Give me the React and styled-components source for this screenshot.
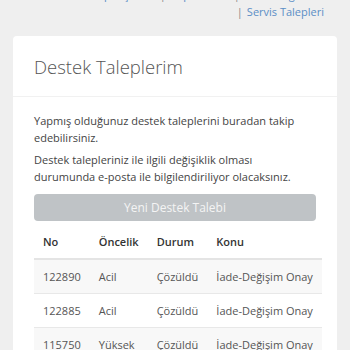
import React from "react";
import styled, { createGlobalStyle } from "styled-components";

const Global = createGlobalStyle`
  html, body { margin: 0; padding: 0; background: #efefef; }
  body { font-family: "Open Sans", "Liberation Sans", sans-serif; color: #555; }
  * { box-sizing: border-box; }
`;

const Page = styled.div`
  width: 350px;
  height: 350px;
  overflow: hidden;
  background: #efefef;
`;

const Nav = styled.div`
  margin-top: -14px;
  padding-right: 26px;
  text-align: right;
  font-size: 11px;
  line-height: 17px;
`;

const NavLine = styled.div`
  white-space: nowrap;
`;

const Sep = styled.span`
  color: #888;
  margin: 0 4px;
`;

const Link = styled.a`
  color: #5b8ec6;
  text-decoration: none;
`;

const Card = styled.div`
  margin: 16px 13px 0;
  background: #fff;
  border-radius: 4px;
`;

const CardHeader = styled.div`
  padding: 17px 21px 16px;
  border-bottom: 1px solid #f1f1f1;
`;

const Title = styled.h2`
  margin: 0;
  font-size: 18.5px;
  line-height: 27px;
  font-weight: 300;
  color: #555;
`;

const CardBody = styled.div`
  padding: 15px 21px 0;
`;

const Text = styled.p`
  margin: 0 0 5px;
  font-size: 11px;
  line-height: 17px;
  color: #444;
`;

const Button = styled.button`
  display: block;
  width: 100%;
  height: 27px;
  margin-top: 9px;
  border: none;
  border-radius: 4px;
  background: #bfc3c6;
  color: #f4f4f4;
  font-family: inherit;
  font-size: 12px;
`;

const Table = styled.table`
  width: 100%;
  margin-top: 4px;
  border-collapse: collapse;
  font-size: 11px;
  line-height: 17px;
`;

const Th = styled.th`
  text-align: left;
  font-weight: 600;
  color: #333;
  padding: 8px 9px;
  border-bottom: 2px solid #e4e4e4;
  white-space: nowrap;
`;

const Tr = styled.tr`
  background: ${(p) => (p.$striped ? "#f8f8f8" : "#fff")};
  border-top: 1px solid #e8e8e8;
`;

const Td = styled.td`
  padding: 8px 9px;
  color: #555;
  white-space: nowrap;
`;

const rows = [
  ["122890", "Acil", "Çözüldü", "İade-Değişim Onay"],
  ["122885", "Acil", "Çözüldü", "İade-Değişim Onay"],
  ["115750", "Yüksek", "Çözüldü", "İade-Değişim Onay"],
];

export default function App() {
  return (
    <Page>
      <Global />
      <Nav>
        <NavLine>
          <Link>Siparişlerim</Link>
          <Sep>|</Sep>
          <Link>Kuponlarım</Link>
          <Sep>|</Sep>
          <Link>Adres Bilgilerim</Link>
        </NavLine>
        <NavLine>
          <Sep>|</Sep>
          <Link>Servis Talepleri</Link>
        </NavLine>
      </Nav>
      <Card>
        <CardHeader>
          <Title>Destek Taleplerim</Title>
        </CardHeader>
        <CardBody>
          <Text>Yapmış olduğunuz destek taleplerini buradan takip edebilirsiniz.</Text>
          <Text>Destek talepleriniz ile ilgili değişiklik olması durumunda e-posta ile bilgilendiriliyor olacaksınız.</Text>
          <Button>Yeni Destek Talebi</Button>
          <Table>
            <thead>
              <tr>
                <Th>No</Th>
                <Th>Öncelik</Th>
                <Th>Durum</Th>
                <Th>Konu</Th>
              </tr>
            </thead>
            <tbody>
              {rows.map((r, i) => (
                <Tr key={i} $striped={i % 2 === 0}>
                  {r.map((c, j) => (
                    <Td key={j}>{c}</Td>
                  ))}
                </Tr>
              ))}
            </tbody>
          </Table>
        </CardBody>
      </Card>
    </Page>
  );
}
